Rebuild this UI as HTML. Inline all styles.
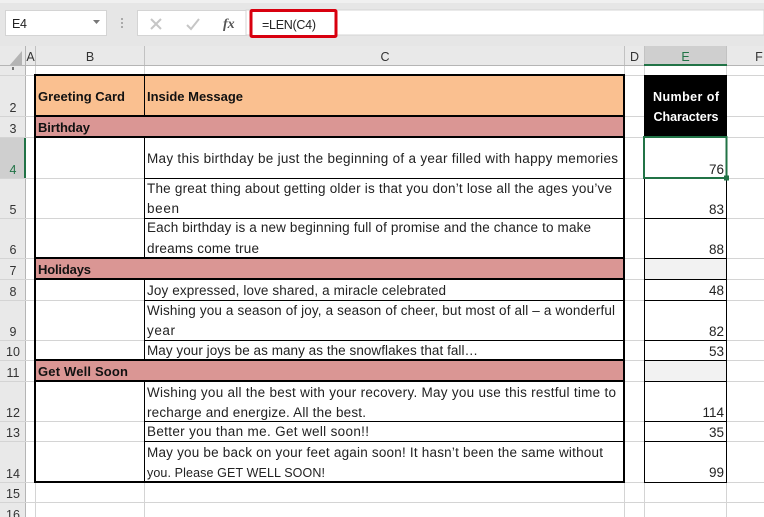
<!DOCTYPE html>
<html><head><meta charset="utf-8"><style>
html,body{margin:0;padding:0;width:764px;height:517px;overflow:hidden;background:#fff}
svg{display:block}
text{font-family:"Liberation Sans",sans-serif;font-size:13.5px;fill:#222}
.b{font-weight:bold;fill:#111}
.h{font-size:12.5px;fill:#333;text-anchor:middle}
.r{text-anchor:end}
</style></head><body>
<svg width="764" height="517" viewBox="0 0 764 517" xmlns="http://www.w3.org/2000/svg">
<rect width="764" height="517" fill="#fff"/>
<!-- toolbar -->
<rect width="764" height="46" fill="#e6e6e6"/>
<rect width="764" height="3" fill="#f0f0f0"/>
<rect y="46" width="764" height="20" fill="#e9e9e9"/>
<rect x="5.500" y="10.500" width="101" height="25" fill="#fff" stroke="#d4d4d4"/>
<text x="12" y="28" style="font-size:12.500px" fill="#333" textLength="15">E4</text>
<path d="M93 20h7l-3.500 4z" fill="#777"/>
<g fill="#aaa"><rect x="121" y="18" width="2" height="2"/><rect x="121" y="22" width="2" height="2"/><rect x="121" y="26" width="2" height="2"/></g>
<rect x="137.500" y="10.500" width="109" height="25" fill="#fff" stroke="#d4d4d4"/>
<path d="M151 19l10 10M161 19l-10 10" stroke="#c6c6c6" stroke-width="2" fill="none"/>
<path d="M187 25l4 4 8-10" stroke="#c6c6c6" stroke-width="2" fill="none"/>
<text x="223" y="28" style="font-family:'Liberation Serif',serif;font-style:italic;font-size:14px;fill:#555;font-weight:bold">fx</text>
<rect x="246" y="10" width="518" height="25" fill="#fff" stroke="#d4d4d4"/>
<rect x="251" y="10.500" width="85" height="26" rx="1" fill="#fff" stroke="#d8000f" stroke-width="3"/>
<text x="262" y="29" style="font-size:12.500px" textLength="54">=LEN(C4)</text>
<!-- headers -->
<rect x="644" y="46" width="82" height="19" fill="#cfcfcf"/>
<rect y="66" width="25" height="451" fill="#e9e9e9"/>
<rect y="137" width="25" height="41" fill="#cfcfcf"/>
<path d="M22 51v15H9z" fill="#b4b4b4"/>
<path d="M0 65.500H644M726 65.500H764" stroke="#b5b5b5"/>
<path d="M25.500 46V517" stroke="#b5b5b5"/>
<path d="M35.500 46V65M144.500 46V65M624.500 46V65M644.500 46V65M726.500 46V65" stroke="#c2c2c2"/>
<rect x="644" y="64" width="83" height="2" fill="#217346"/>
<rect x="24" y="137" width="2" height="41" fill="#217346"/>
<rect x="12" y="67" width="2" height="3" fill="#777"/>
<g class="hh">
<text class="h" x="30.500" y="61">A</text><text class="h" x="90" y="61">B</text><text class="h" x="385" y="61">C</text><text class="h" x="634.500" y="61">D</text><text class="h" x="685.500" y="61" style="fill:#217346">E</text><text class="h" x="759" y="61">F</text>
<text class="h" x="13" y="112">2</text><text class="h" x="13" y="133">3</text><text class="h" x="13" y="174" style="fill:#217346">4</text><text class="h" x="13" y="214">5</text><text class="h" x="13" y="254">6</text><text class="h" x="13" y="275">7</text><text class="h" x="13" y="296">8</text><text class="h" x="13" y="336">9</text><text class="h" x="13" y="356">10</text><text class="h" x="13" y="377">11</text><text class="h" x="13" y="417">12</text><text class="h" x="13" y="437">13</text><text class="h" x="13" y="478">14</text><text class="h" x="13" y="498">15</text><text class="h" x="13" y="519">16</text>
</g>
<!-- gridlines -->
<g stroke="#d4d4d4" fill="none">
<path d="M0 75.500H764M0 116.500H764M0 137.500H764M0 178.500H764M0 218.500H764M0 258.500H764M0 279.500H764M0 300.500H764M0 340.500H764M0 360.500H764M0 381.500H764M0 421.500H764M0 441.500H764M0 482.500H764M0 502.500H764"/>
<path d="M35.500 66V517M144.500 66V517M624.500 66V517M644.500 66V517M726.500 66V517"/>
</g>
<!-- fills -->
<rect x="35" y="75" width="589" height="41" fill="#fac090"/>
<rect x="35" y="116" width="589" height="21" fill="#da9694"/>
<rect x="35" y="258" width="589" height="21" fill="#da9694"/>
<rect x="35" y="360" width="589" height="21" fill="#da9694"/>
<rect x="644" y="75" width="83" height="62" fill="#000"/>
<rect x="645" y="259" width="81" height="20" fill="#f2f2f2"/>
<rect x="645" y="361" width="81" height="20" fill="#f2f2f2"/>
<!-- table lines -->
<g stroke="#000" fill="none">
<path d="M144.500 75V116M144.500 137V258M144.500 279V360M144.500 381V482"/>
<path d="M144 178.500H624M144 218.500H624M144 300.500H624M144 340.500H624M144 421.500H624M144 441.500H624"/>
<path d="M644.500 137V482.500M726.500 137V482.500"/>
<path d="M644 178.500H727M644 218.500H727M644 258.500H727M644 279.500H727M644 300.500H727M644 340.500H727M644 360.500H727M644 381.500H727M644 421.500H727M644 441.500H727M644 482.500H727"/>
</g>
<g stroke="#000" stroke-width="2" fill="none">
<rect x="35" y="75" width="589" height="407"/>
<path d="M35 116H624M35 137H624M35 258H624M35 279H624M35 360H624M35 381H624"/>
</g>
<!-- selection -->
<rect x="644" y="137" width="82.500" height="41" fill="none" stroke="#217346" stroke-width="2"/>
<rect x="724" y="175.500" width="5" height="5" fill="#217346"/>
<!-- text -->
<text class="b" x="38" y="101" textLength="87" style="font-size:13px">Greeting Card</text>
<text class="b" x="147" y="101" textLength="96" style="font-size:13px">Inside Message</text>
<text class="b" x="38" y="132" textLength="52" style="font-size:13px">Birthday</text>
<text class="b" x="38" y="274" textLength="53" style="font-size:13px">Holidays</text>
<text class="b" x="38" y="376" textLength="90" style="font-size:13px">Get Well Soon</text>
<text class="b" x="653" y="101" textLength="66" style="fill:#fff;font-size:12.500px">Number of</text>
<text class="b" x="653.500" y="121" textLength="65" style="fill:#fff;font-size:12.500px">Characters</text>
<text x="147" y="163" textLength="471">May this birthday be just the beginning of a year filled with happy memories</text>
<text x="147" y="193" textLength="465">The great thing about getting older is that you don’t lose all the ages you’ve</text>
<text x="147" y="213" textLength="32">been</text>
<text x="147" y="232" textLength="444">Each birthday is a new beginning full of promise and the chance to make</text>
<text x="147" y="253" textLength="112">dreams come true</text>
<text x="147" y="295" textLength="299">Joy expressed, love shared, a miracle celebrated</text>
<text x="147" y="315" textLength="468">Wishing you a season of joy, a season of cheer, but most of all – a wonderful</text>
<text x="147" y="335" textLength="28">year</text>
<text x="147" y="355" textLength="331">May your joys be as many as the snowflakes that fall…</text>
<text x="147" y="397" textLength="469">Wishing you all the best with your recovery. May you use this restful time to</text>
<text x="147" y="417" textLength="219">recharge and energize. All the best.</text>
<text x="147" y="436" textLength="222">Better you than me. Get well soon!!</text>
<text x="147" y="457" textLength="456">May you be back on your feet again soon! It hasn’t been the same without</text>
<text x="147" y="477" textLength="178" style="font-size:12.500px">you. Please GET WELL SOON!</text>
<g>
<text class="r" x="724" y="174">76</text><text class="r" x="724" y="214">83</text><text class="r" x="724" y="254">88</text><text class="r" x="724" y="295">48</text><text class="r" x="724" y="336">82</text><text class="r" x="724" y="356">53</text><text class="r" x="724" y="417">114</text><text class="r" x="724" y="437">35</text><text class="r" x="724" y="477">99</text>
</g>
</svg>
</body></html>
